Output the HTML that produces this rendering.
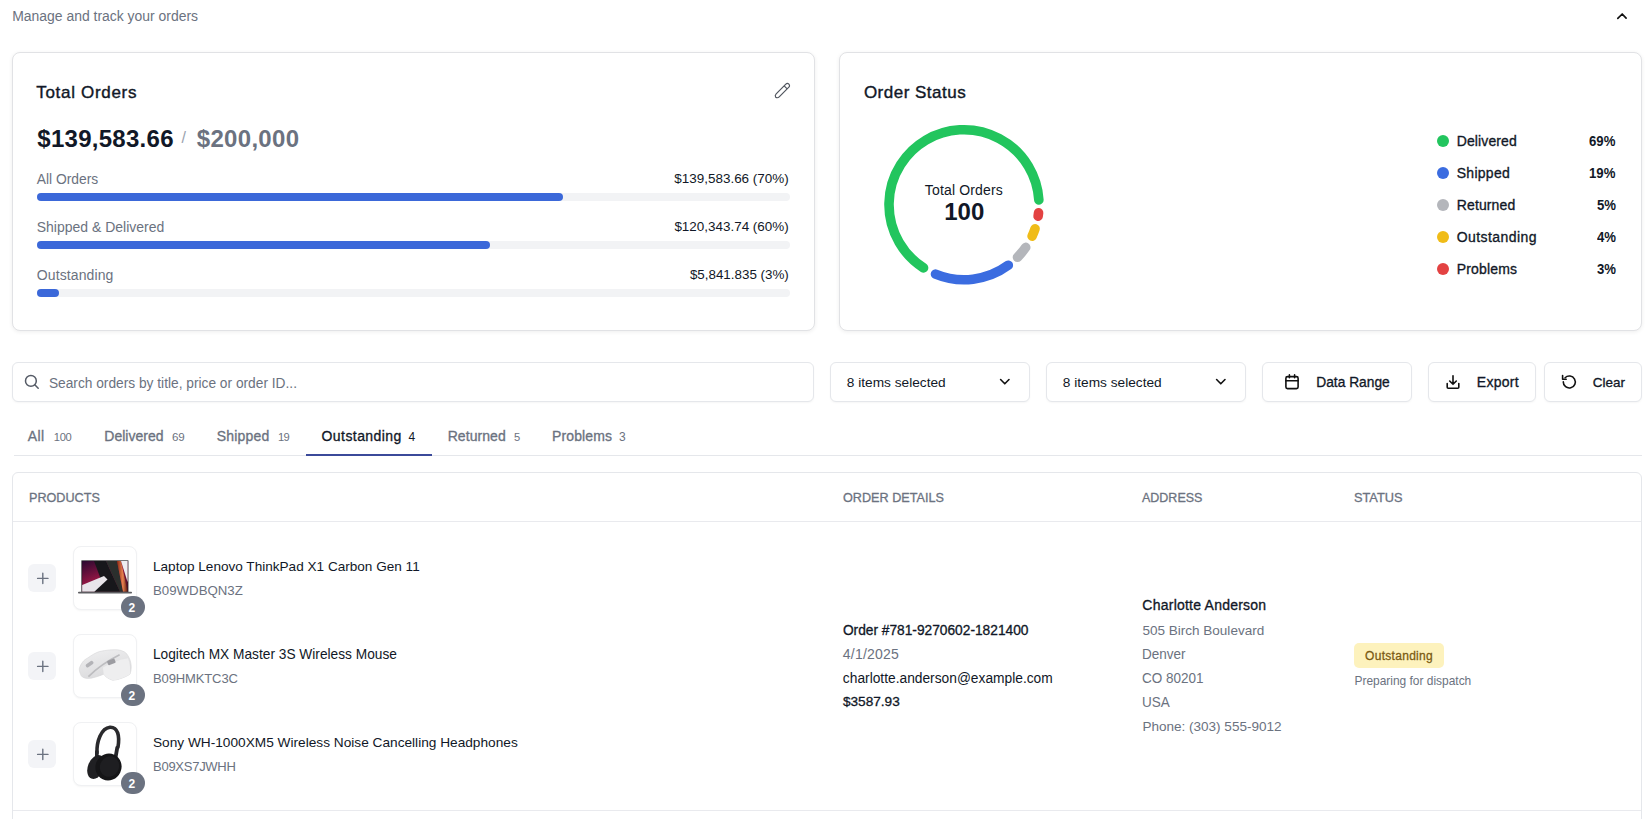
<!DOCTYPE html>
<html><head><meta charset="utf-8">
<style>
html,body{margin:0;padding:0;background:#fff;}
body{width:1647px;height:819px;overflow:hidden;position:relative;font-family:"Liberation Sans",sans-serif;}
.t{position:absolute;white-space:pre;font-family:"Liberation Sans",sans-serif;-webkit-font-smoothing:antialiased;}
.a{position:absolute;box-sizing:border-box;}
.card{border:1px solid #e1e2e5;border-radius:8px;background:#fff;box-shadow:0 1px 4px rgba(0,0,0,0.07);}
.track{height:8px;border-radius:4px;background:#f2f3f5;}
.fill{height:8px;border-radius:4px;background:#3b68d9;}
.box{border:1px solid #e5e7eb;border-radius:6px;background:#fff;box-shadow:0 1px 2px rgba(0,0,0,0.04);}
.dot{width:12px;height:12px;border-radius:50%;}
.plus{width:28px;height:28px;border-radius:6px;background:#f3f4f7;}
.img{width:64px;height:64px;border:1px solid #f0f1f3;border-radius:8px;background:#fff;box-shadow:0 1px 2px rgba(0,0,0,0.04);}
.badge{width:24px;height:22px;border-radius:11px;background:#6b7280;}
svg{position:absolute;overflow:visible;}
</style></head><body>
<!-- header chevron -->
<svg style="left:1610px;top:6px" width="20" height="20" viewBox="0 0 20 20"><path d="M7.8 12.3 L12.2 8 L16.1 12.1" fill="none" stroke="#111" stroke-width="1.7" stroke-linecap="round" stroke-linejoin="round"/></svg>

<!-- card 1 -->
<div class="a card" style="left:12px;top:52px;width:803px;height:279px"></div>
<svg style="left:770px;top:80px" width="24" height="24" viewBox="0 0 24 24">
  <g transform="translate(12.2,10.8) rotate(-45)">
    <path d="M-9.2 0 Q-8.6 -2.15 -6.4 -2.15 L7.3 -2.15 A2.15 2.15 0 0 1 7.3 2.15 L-6.4 2.15 Q-8.6 2.15 -9.2 0 Z" fill="none" stroke="#50555e" stroke-width="1.2" stroke-linejoin="round"/>
    <line x1="4.9" y1="-2.15" x2="4.9" y2="2.15" stroke="#50555e" stroke-width="1.2"/>
  </g>
</svg>
<div class="t" style="left:181.5px;top:130px;font-size:16px;line-height:16px;color:#9ca3af;">/</div>
<div class="a track" style="left:37px;top:193px;width:753px"></div>
<div class="a fill" style="left:37px;top:193px;width:525.5px"></div>
<div class="a track" style="left:37px;top:241px;width:753px"></div>
<div class="a fill" style="left:37px;top:241px;width:453px"></div>
<div class="a track" style="left:37px;top:289px;width:753px"></div>
<div class="a fill" style="left:37px;top:289px;width:22px"></div>

<!-- card 2 -->
<div class="a card" style="left:839px;top:52px;width:803px;height:279px"></div>
<svg style="left:0;top:0" width="1647" height="819"><path d="M923.52 267.84 A75.0 75.0 0 1 1 1038.85 199.90" fill="none" stroke="#22c55e" stroke-width="9.6" stroke-linecap="round"/><path d="M1038.57 212.76 A75.0 75.0 0 0 1 1038.11 216.22" fill="none" stroke="#e34242" stroke-width="9.6" stroke-linecap="round"/><path d="M1035.05 228.70 A75.0 75.0 0 0 1 1032.07 236.20" fill="none" stroke="#f0bc18" stroke-width="9.6" stroke-linecap="round"/><path d="M1025.69 247.36 A75.0 75.0 0 0 1 1017.46 257.30" fill="none" stroke="#b4b6bb" stroke-width="9.6" stroke-linecap="round"/><path d="M1008.33 265.20 A75.0 75.0 0 0 1 935.50 274.07" fill="none" stroke="#3b6ce0" stroke-width="9.6" stroke-linecap="round"/></svg>
<div class="a dot" style="left:1437px;top:135px;background:#22c55e"></div>
<div class="a dot" style="left:1437px;top:167px;background:#3b6ce0"></div>
<div class="a dot" style="left:1437px;top:199px;background:#b4b6bb"></div>
<div class="a dot" style="left:1437px;top:231px;background:#f0bc18"></div>
<div class="a dot" style="left:1437px;top:263px;background:#e34242"></div>


<!-- toolbar -->
<div class="a box" style="left:12px;top:362px;width:802px;height:40px"></div>
<svg style="left:23px;top:373px" width="18" height="18" viewBox="0 0 18 18"><circle cx="7.9" cy="7.9" r="5.4" fill="none" stroke="#555b66" stroke-width="1.5"/><path d="M11.8 11.8 L15.2 15.2" stroke="#555b66" stroke-width="1.5" stroke-linecap="round"/></svg>
<div class="a box" style="left:830px;top:362px;width:200px;height:40px"></div>
<svg style="left:995px;top:372px" width="20" height="20" viewBox="0 0 20 20"><path d="M5.6 7.5 L9.8 11.8 L14 7.5" fill="none" stroke="#111" stroke-width="1.6" stroke-linecap="round" stroke-linejoin="round"/></svg>
<div class="a box" style="left:1046px;top:362px;width:200px;height:40px"></div>
<svg style="left:1211px;top:372px" width="20" height="20" viewBox="0 0 20 20"><path d="M5.6 7.5 L9.8 11.8 L14 7.5" fill="none" stroke="#111" stroke-width="1.6" stroke-linecap="round" stroke-linejoin="round"/></svg>
<div class="a box" style="left:1262px;top:362px;width:150px;height:40px"></div>
<svg style="left:1284px;top:374px" width="16" height="16" viewBox="0 0 16 16"><rect x="1.9" y="2.6" width="12.2" height="12" rx="1.6" fill="none" stroke="#111" stroke-width="1.6"/><path d="M1.9 6.7 H14.1 M5.4 0.9 V3.8 M10.6 0.9 V3.8" stroke="#111" stroke-width="1.6" stroke-linecap="round"/></svg>
<div class="a box" style="left:1428px;top:362px;width:108px;height:40px"></div>
<svg style="left:1445px;top:374px" width="16" height="16" viewBox="0 0 16 16"><path d="M2.2 9.6 V13.2 A1 1 0 0 0 3.2 14.2 H12.8 A1 1 0 0 0 13.8 13.2 V9.6" fill="none" stroke="#111" stroke-width="1.6" stroke-linecap="round" stroke-linejoin="round"/><path d="M8 1.8 V10.2 M4.7 7 L8 10.3 L11.3 7" fill="none" stroke="#111" stroke-width="1.6" stroke-linecap="round" stroke-linejoin="round"/></svg>
<div class="a box" style="left:1544px;top:362px;width:98px;height:40px"></div>
<svg style="left:1561px;top:374px" width="16" height="16" viewBox="0 0 16 16"><path d="M2.3 7.9 A6 6 0 1 0 4.1 3.7" fill="none" stroke="#111" stroke-width="1.6" stroke-linecap="round"/><path d="M1.6 1.6 V5.2 H5.2" fill="none" stroke="#111" stroke-width="1.6" stroke-linecap="round" stroke-linejoin="round"/></svg>

<!-- tabs -->
<div class="a" style="left:14px;top:455px;width:1628px;height:1px;background:#e5e7eb"></div>
<div class="a" style="left:306px;top:454px;width:126px;height:2px;background:#3b4a9a"></div>

<!-- table -->
<div class="a" style="left:12px;top:472px;width:1630px;height:400px;border:1px solid #e5e7eb;border-radius:6px;background:#fff"></div>
<div class="a" style="left:13px;top:521px;width:1628px;height:1px;background:#e9eaee"></div>
<div class="a" style="left:13px;top:810px;width:1628px;height:1px;background:#e9eaee"></div>
<div class="a plus" style="left:28px;top:564px"></div>
<svg style="left:28px;top:564px" width="28" height="28" viewBox="0 0 28 28"><path d="M14.8 9.2 V19.6 M9.6 14.4 H20" stroke="#6b7280" stroke-width="1.4" stroke-linecap="round"/></svg>
<div class="a img" style="left:73px;top:546px"></div>
<svg style="left:73px;top:546px" width="64" height="64" viewBox="0 0 64 64">
<defs><linearGradient id="lg1" x1="0" y1="0" x2="0.6" y2="1"><stop offset="0" stop-color="#2a0830"/><stop offset="0.55" stop-color="#8c1642"/><stop offset="1" stop-color="#5a1028"/></linearGradient>
<linearGradient id="lg2" x1="0" y1="0" x2="1" y2="0"><stop offset="0" stop-color="#8a2a12"/><stop offset="0.55" stop-color="#e88050"/><stop offset="1" stop-color="#5a1a0a"/></linearGradient></defs>
<rect x="8.4" y="14.4" width="47" height="31.8" fill="#1b1b1f"/>
<rect x="9.2" y="15.1" width="45.4" height="30.6" fill="url(#lg1)"/>
<polygon points="21,15.1 33,15.1 47,45.7 21.3,45.7 27,31" fill="#17171b"/>
<polygon points="33,15.1 44,15.1 50,45.7 47,45.7" fill="#2b2f2d"/>
<polygon points="44,15.1 48,15.1 54.6,45.7 50,45.7" fill="url(#lg2)"/>
<polygon points="48,15.1 54.6,15.1 54.6,36" fill="#eeedf0"/>
<polygon points="9.2,39 31,30 34.5,33.5 21.3,45.7 9.2,45.7" fill="#e8e5ea"/>
<rect x="5" y="45.8" width="54" height="1.8" rx="0.8" fill="#5e5e62"/>
</svg>
<div class="a badge" style="left:120.5px;top:596px"></div>
<div class="t" style="left:128.6px;top:601.6px;font-size:12px;line-height:12px;font-weight:700;color:#fff">2</div>
<div class="a plus" style="left:28px;top:652px"></div>
<svg style="left:28px;top:652px" width="28" height="28" viewBox="0 0 28 28"><path d="M14.8 9.2 V19.6 M9.6 14.4 H20" stroke="#6b7280" stroke-width="1.4" stroke-linecap="round"/></svg>
<div class="a img" style="left:73px;top:634px"></div>
<svg style="left:73px;top:634px" width="64" height="64" viewBox="0 0 64 64">
<defs><linearGradient id="mg" x1="0" y1="0" x2="0.4" y2="1"><stop offset="0" stop-color="#f0f0f1"/><stop offset="1" stop-color="#dadadc"/></linearGradient></defs>
<path d="M6.3 34.7 C8 29 11 26 14.2 24.3 C19 21 23 18.5 26.4 17.6 C33 16 40 15.5 44.7 15.8 C50 16.5 53.5 18.5 55.1 21.9 C57 25 58.2 29 58.2 32.3 C58.3 35 57.8 38 57 40.2 C53 43 45 46 39.8 46.3 C35 45 32 42 30.7 40.2 C26 42 20 44.5 14.2 44.5 C10 44 8 42.5 7.5 40 C6.5 38 6.2 36 6.3 34.7 Z" fill="url(#mg)" stroke="#d6d6d8" stroke-width="0.6"/>
<path d="M15.4 42.6 C22 36 34 27 46.6 20.7" fill="none" stroke="#bdbdc0" stroke-width="1.6"/>
<path d="M30 33.5 C38 29 47 25.5 55 24.3 C57 29 57.5 35 57 40.2 C53 43 45 46 39.8 46.3 C35 45 32 42 30.7 40.2 Z" fill="#eeeeef"/>
<rect x="34.4" y="25.6" width="8" height="4.6" rx="1.2" transform="rotate(-22 38.4 27.9)" fill="#9c9ca1"/>
<rect x="12.4" y="28.4" width="8.4" height="3.6" rx="1.4" transform="rotate(-35 16.6 30.2)" fill="#b3b3b7"/>
</svg>
<div class="a badge" style="left:120.5px;top:684px"></div>
<div class="t" style="left:128.6px;top:689.6px;font-size:12px;line-height:12px;font-weight:700;color:#fff">2</div>
<div class="a plus" style="left:28px;top:740px"></div>
<svg style="left:28px;top:740px" width="28" height="28" viewBox="0 0 28 28"><path d="M14.8 9.2 V19.6 M9.6 14.4 H20" stroke="#6b7280" stroke-width="1.4" stroke-linecap="round"/></svg>
<div class="a img" style="left:73px;top:722px"></div>
<svg style="left:73px;top:722px" width="64" height="64" viewBox="0 0 64 64">
<path d="M24 31 C23.5 20 28 6 37 5.2 C45 5 46.8 14 45 25" fill="none" stroke="#2a2a2d" stroke-width="3.6" stroke-linecap="round"/>
<rect x="41.6" y="24" width="3.8" height="13" rx="1.6" fill="#26262a" transform="rotate(10 43.5 30)"/>
<rect x="22" y="28" width="3.6" height="8" rx="1.6" fill="#26262a"/>
<ellipse cx="23" cy="45" rx="8" ry="12.5" transform="rotate(22 23 45)" fill="#202023"/>
<ellipse cx="35.5" cy="45" rx="13" ry="13.6" transform="rotate(25 35.5 45)" fill="#151517"/>
<ellipse cx="36.5" cy="44.5" rx="9.5" ry="10.5" transform="rotate(25 36.5 44.5)" fill="#1e1e21"/>
</svg>
<div class="a badge" style="left:120.5px;top:772px"></div>
<div class="t" style="left:128.6px;top:777.6px;font-size:12px;line-height:12px;font-weight:700;color:#fff">2</div>
<div class="a" style="left:1354px;top:643px;width:90px;height:25px;border-radius:5px;background:#fdf2bd"></div>


<div class='t' style='top:10.00px;font-size:13.94px;line-height:13.94px;font-weight:400;color:#6b7280;left:12.16px;'>Manage and track your orders</div>
<div class='t' style='top:84.01px;font-size:17.0px;line-height:17.0px;font-weight:400;color:#111827;-webkit-text-stroke:0.39px #111827;letter-spacing:0.691px;left:36.28px;'>Total Orders</div>
<div class='t' style='top:127.01px;font-size:24.0px;line-height:24.0px;font-weight:700;color:#111827;letter-spacing:0.281px;left:37.26px;'>$139,583.66</div>
<div class='t' style='top:127.01px;font-size:24.0px;line-height:24.0px;font-weight:700;color:#6b7280;letter-spacing:0.310px;left:196.76px;'>$200,000</div>
<div class='t' style='top:173.02px;font-size:13.83px;line-height:13.83px;font-weight:400;color:#6b7280;left:36.77px;'>All Orders</div>
<div class='t' style='top:172.01px;font-size:13.46px;line-height:13.46px;font-weight:400;color:#111827;left:674.29px;'>$139,583.66 (70%)</div>
<div class='t' style='top:220.01px;font-size:13.99px;line-height:13.99px;font-weight:400;color:#6b7280;left:36.76px;'>Shipped &amp; Delivered</div>
<div class='t' style='top:220.01px;font-size:13.45px;line-height:13.45px;font-weight:400;color:#111827;left:674.39px;'>$120,343.74 (60%)</div>
<div class='t' style='top:268.00px;font-size:14.0px;line-height:14.0px;font-weight:400;color:#6b7280;letter-spacing:0.108px;left:36.76px;'>Outstanding</div>
<div class='t' style='top:268.01px;font-size:13.38px;line-height:13.38px;font-weight:400;color:#111827;left:689.90px;'>$5,841.835 (3%)</div>
<div class='t' style='top:84.01px;font-size:17.0px;line-height:17.0px;font-weight:400;color:#111827;-webkit-text-stroke:0.39px #111827;letter-spacing:0.492px;left:863.88px;'>Order Status</div>
<div class='t' style='top:183.01px;font-size:14.0px;line-height:14.0px;font-weight:400;color:#111827;letter-spacing:0.148px;left:924.86px;'>Total Orders</div>
<div class='t' style='top:200.01px;font-size:24.0px;line-height:24.0px;font-weight:700;color:#111827;letter-spacing:0.117px;left:944.16px;'>100</div>
<div class='t' style='top:134.00px;font-size:14.0px;line-height:14.0px;font-weight:400;color:#111827;-webkit-text-stroke:0.32px #111827;letter-spacing:0.105px;left:1456.76px;'>Delivered</div>
<div class='t' style='top:134.00px;font-size:14px;line-height:14px;font-weight:700;color:#111827;left:1589.36px;transform:scaleX(0.94);transform-origin:0 0;'>69%</div>
<div class='t' style='top:166.00px;font-size:14.0px;line-height:14.0px;font-weight:400;color:#111827;-webkit-text-stroke:0.32px #111827;letter-spacing:0.265px;left:1456.76px;'>Shipped</div>
<div class='t' style='top:166.00px;font-size:14px;line-height:14px;font-weight:700;color:#111827;left:1589.36px;transform:scaleX(0.94);transform-origin:0 0;'>19%</div>
<div class='t' style='top:198.00px;font-size:14.0px;line-height:14.0px;font-weight:400;color:#111827;-webkit-text-stroke:0.32px #111827;letter-spacing:0.127px;left:1456.76px;'>Returned</div>
<div class='t' style='top:198.00px;font-size:14px;line-height:14px;font-weight:700;color:#111827;left:1596.69px;transform:scaleX(0.94);transform-origin:0 0;'>5%</div>
<div class='t' style='top:230.00px;font-size:14.0px;line-height:14.0px;font-weight:400;color:#111827;-webkit-text-stroke:0.32px #111827;letter-spacing:0.428px;left:1456.76px;'>Outstanding</div>
<div class='t' style='top:230.00px;font-size:14px;line-height:14px;font-weight:700;color:#111827;left:1596.69px;transform:scaleX(0.94);transform-origin:0 0;'>4%</div>
<div class='t' style='top:262.00px;font-size:14.0px;line-height:14.0px;font-weight:400;color:#111827;-webkit-text-stroke:0.32px #111827;letter-spacing:0.177px;left:1456.76px;'>Problems</div>
<div class='t' style='top:262.00px;font-size:14px;line-height:14px;font-weight:700;color:#111827;left:1596.69px;transform:scaleX(0.94);transform-origin:0 0;'>3%</div>
<div class='t' style='top:377.00px;font-size:13.74px;line-height:13.74px;font-weight:400;color:#6b7280;left:48.88px;'>Search orders by title, price or order ID...</div>
<div class='t' style='top:376.01px;font-size:13.69px;line-height:13.69px;font-weight:400;color:#111827;left:846.78px;'>8 items selected</div>
<div class='t' style='top:376.01px;font-size:13.69px;line-height:13.69px;font-weight:400;color:#111827;left:1062.78px;'>8 items selected</div>
<div class='t' style='top:376.01px;font-size:13.78px;line-height:13.78px;font-weight:400;color:#111827;-webkit-text-stroke:0.31px #111827;left:1316.27px;'>Data Range</div>
<div class='t' style='top:375.01px;font-size:14.0px;line-height:14.0px;font-weight:400;color:#111827;-webkit-text-stroke:0.32px #111827;letter-spacing:0.302px;left:1476.76px;'>Export</div>
<div class='t' style='top:376.01px;font-size:13.44px;line-height:13.44px;font-weight:400;color:#111827;-webkit-text-stroke:0.31px #111827;left:1592.79px;'>Clear</div>
<div class='t' style='top:429.01px;font-size:14.0px;line-height:14.0px;font-weight:400;color:#6b7280;-webkit-text-stroke:0.32px #6b7280;letter-spacing:0.459px;left:27.66px;'>All</div>
<div class='t' style='top:432.01px;font-size:11.16px;line-height:11.16px;font-weight:400;color:#6b7280;letter-spacing:-0.274px;left:53.73px;'>100</div>
<div class='t' style='top:429.01px;font-size:14.0px;line-height:14.0px;font-weight:400;color:#6b7280;-webkit-text-stroke:0.32px #6b7280;left:104.36px;'>Delivered</div>
<div class='t' style='top:431.01px;font-size:11.6px;line-height:11.6px;font-weight:400;color:#6b7280;left:171.90px;'>69</div>
<div class='t' style='top:429.01px;font-size:14.0px;line-height:14.0px;font-weight:400;color:#6b7280;-webkit-text-stroke:0.32px #6b7280;letter-spacing:0.215px;left:216.66px;'>Shipped</div>
<div class='t' style='top:432.01px;font-size:11.16px;line-height:11.16px;font-weight:400;color:#6b7280;letter-spacing:-0.643px;left:278.03px;'>19</div>
<div class='t' style='top:429.01px;font-size:14.0px;line-height:14.0px;font-weight:400;color:#111827;-webkit-text-stroke:0.32px #111827;letter-spacing:0.428px;left:321.56px;'>Outstanding</div>
<div class='t' style='top:431.01px;font-size:12.0px;line-height:12.0px;font-weight:400;color:#111827;left:408.48px;'>4</div>
<div class='t' style='top:429.01px;font-size:14.0px;line-height:14.0px;font-weight:400;color:#6b7280;-webkit-text-stroke:0.32px #6b7280;letter-spacing:0.069px;left:447.66px;'>Returned</div>
<div class='t' style='top:432.01px;font-size:11.16px;line-height:11.16px;font-weight:400;color:#6b7280;left:514.03px;'>5</div>
<div class='t' style='top:429.01px;font-size:14.0px;line-height:14.0px;font-weight:400;color:#6b7280;-webkit-text-stroke:0.32px #6b7280;letter-spacing:0.106px;left:552.06px;'>Problems</div>
<div class='t' style='top:431.01px;font-size:12.0px;line-height:12.0px;font-weight:400;color:#6b7280;left:618.98px;'>3</div>
<div class='t' style='top:491.01px;font-size:13.7px;line-height:13.7px;font-weight:400;color:#6b7280;-webkit-text-stroke:0.31px #6b7280;left:28.98px;transform:scaleX(0.9228315107410997);transform-origin:0 0;'>PRODUCTS</div>
<div class='t' style='top:491.01px;font-size:13.7px;line-height:13.7px;font-weight:400;color:#6b7280;-webkit-text-stroke:0.31px #6b7280;left:842.88px;transform:scaleX(0.9233045531609909);transform-origin:0 0;'>ORDER DETAILS</div>
<div class='t' style='top:491.01px;font-size:13.7px;line-height:13.7px;font-weight:400;color:#6b7280;-webkit-text-stroke:0.31px #6b7280;left:1142.38px;transform:scaleX(0.9123965167921212);transform-origin:0 0;'>ADDRESS</div>
<div class='t' style='top:491.01px;font-size:13.7px;line-height:13.7px;font-weight:400;color:#6b7280;-webkit-text-stroke:0.31px #6b7280;left:1353.58px;transform:scaleX(0.9331549360661443);transform-origin:0 0;'>STATUS</div>
<div class='t' style='top:560.01px;font-size:13.58px;line-height:13.58px;font-weight:400;color:#111827;left:152.99px;'>Laptop Lenovo ThinkPad X1 Carbon Gen 11</div>
<div class='t' style='top:584.01px;font-size:13.26px;line-height:13.26px;font-weight:400;color:#6b7280;left:153.00px;'>B09WDBQN3Z</div>
<div class='t' style='top:648.00px;font-size:13.72px;line-height:13.72px;font-weight:400;color:#111827;left:152.98px;'>Logitech MX Master 3S Wireless Mouse</div>
<div class='t' style='top:672.01px;font-size:13.02px;line-height:13.02px;font-weight:400;color:#6b7280;letter-spacing:-0.133px;left:153.02px;'>B09HMKTC3C</div>
<div class='t' style='top:736.00px;font-size:13.68px;line-height:13.68px;font-weight:400;color:#111827;left:152.98px;'>Sony WH-1000XM5 Wireless Noise Cancelling Headphones</div>
<div class='t' style='top:760.01px;font-size:13.02px;line-height:13.02px;font-weight:400;color:#6b7280;letter-spacing:-0.275px;left:153.02px;'>B09XS7JWHH</div>
<div class='t' style='top:624.00px;font-size:13.74px;line-height:13.74px;font-weight:400;color:#111827;-webkit-text-stroke:0.31px #111827;left:842.88px;'>Order #781-9270602-1821400</div>
<div class='t' style='top:647.01px;font-size:14.0px;line-height:14.0px;font-weight:400;color:#6b7280;letter-spacing:0.211px;left:842.86px;'>4/1/2025</div>
<div class='t' style='top:672.01px;font-size:13.77px;line-height:13.77px;font-weight:400;color:#111827;left:842.87px;'>charlotte.anderson@example.com</div>
<div class='t' style='top:695.01px;font-size:13.65px;line-height:13.65px;font-weight:400;color:#111827;-webkit-text-stroke:0.31px #111827;left:842.88px;'>$3587.93</div>
<div class='t' style='top:598.00px;font-size:14.0px;line-height:14.0px;font-weight:400;color:#111827;-webkit-text-stroke:0.32px #111827;letter-spacing:0.231px;left:1142.36px;'>Charlotte Anderson</div>
<div class='t' style='top:624.01px;font-size:13.54px;line-height:13.54px;font-weight:400;color:#6b7280;left:1142.39px;'>505 Birch Boulevard</div>
<div class='t' style='top:647.00px;font-size:14px;line-height:14px;font-weight:400;color:#6b7280;left:1142.36px;transform:scaleX(0.965);transform-origin:0 0;'>Denver</div>
<div class='t' style='top:671.00px;font-size:14px;line-height:14px;font-weight:400;color:#6b7280;left:1142.36px;transform:scaleX(0.965);transform-origin:0 0;'>CO 80201</div>
<div class='t' style='top:695.00px;font-size:14px;line-height:14px;font-weight:400;color:#6b7280;left:1142.36px;transform:scaleX(0.965);transform-origin:0 0;'>USA</div>
<div class='t' style='top:720.01px;font-size:13.54px;line-height:13.54px;font-weight:400;color:#6b7280;left:1142.39px;'>Phone: (303) 555-9012</div>
<div class='t' style='top:650.01px;font-size:12.0px;line-height:12.0px;font-weight:400;color:#7a5a12;-webkit-text-stroke:0.27px #7a5a12;letter-spacing:0.292px;left:1365.08px;'>Outstanding</div>
<div class='t' style='top:676.01px;font-size:11.94px;line-height:11.94px;font-weight:400;color:#6b7280;left:1354.48px;'>Preparing for dispatch</div>
</body></html>
